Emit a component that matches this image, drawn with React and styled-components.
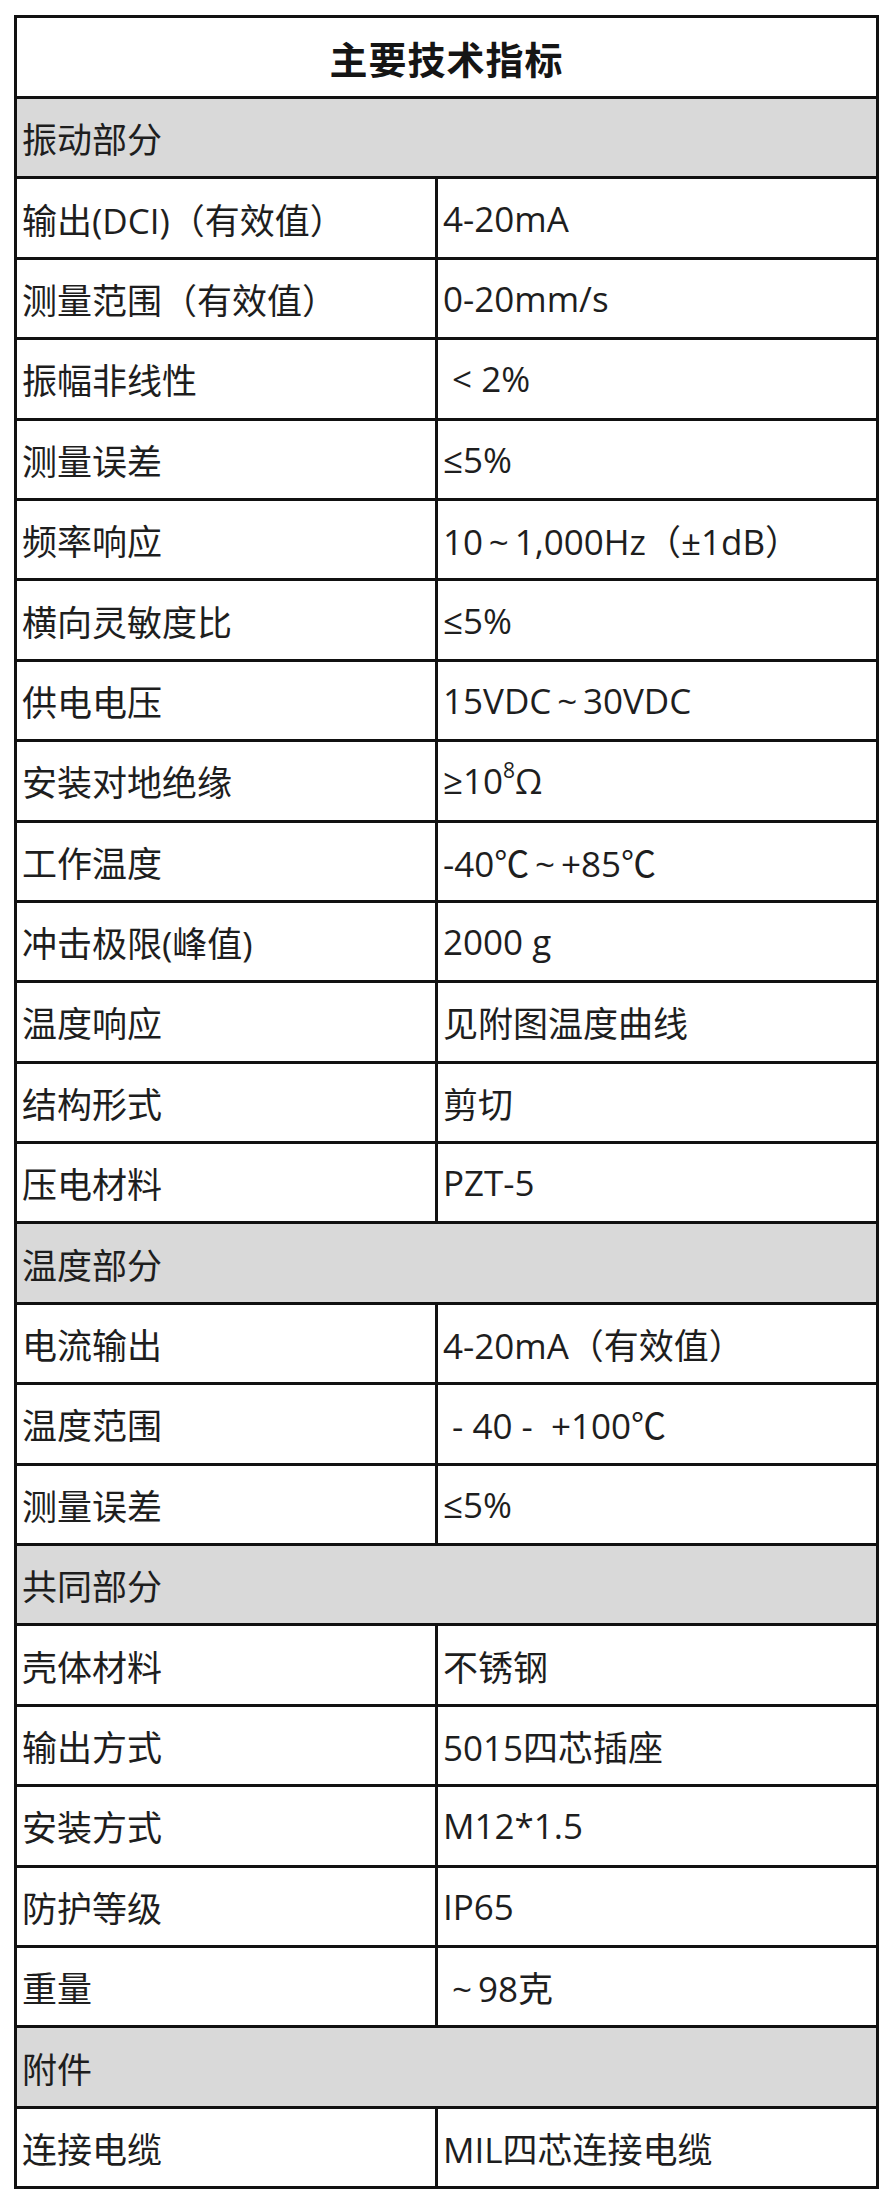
import React from "react";
import styled, { createGlobalStyle } from "styled-components";

const GlobalStyle = createGlobalStyle`
  html, body {
    margin: 0;
    padding: 0;
    background: #ffffff;
  }
  body {
    font-family: "Open Sans", "Noto Sans CJK SC", sans-serif;
    color: #1e1e1e;
  }
`;

const Page = styled.div`
  padding: 15px 0 0 14px;
`;

const SpecTable = styled.table`
  border-collapse: collapse;
  width: 862px;
  table-layout: fixed;
  border: 3px solid #111;
`;

const TitleRow = styled.tr`
  height: 81px;
  & > th {
    border: 3px solid #111;
    font-size: 38px;
    font-weight: 700;
    font-family: "Noto Sans CJK SC", sans-serif;
    text-align: center;
    color: #151515;
    letter-spacing: 1px;
  }
`;

const SectionRow = styled.tr`
  height: 80.4px;
  background: #d9d9d9;
  & > td {
    border: 3px solid #111;
    font-size: 35px;
    padding: 0 0 0 5px;
  }
`;

const SpecRow = styled.tr`
  height: 80.4px;
  & > td {
    border: 3px solid #111;
    font-size: 35px;
    padding: 0 0 0 5px;
    white-space: pre;
    overflow: hidden;
  }
`;

const Sup = styled.sup`
  font-size: 0.6em;
  vertical-align: 0.75em;
  line-height: 0;
`;

// narrow centred tilde, as in the original sheet
const T = "\u2009~\u2009";

const sections = [
  {
    title: "振动部分",
    rows: [
      ["输出(DCI)（有效值）", "4-20mA"],
      ["测量范围（有效值）", "0-20mm/s"],
      ["振幅非线性", " < 2%"],
      ["测量误差", "≤5%"],
      ["频率响应", `10${T}1,000Hz（±1dB）`],
      ["横向灵敏度比", "≤5%"],
      ["供电电压", `15VDC${T}30VDC`],
      ["安装对地绝缘", <>≥10<Sup>8</Sup>Ω</>],
      ["工作温度", `-40℃${T}+85℃`],
      ["冲击极限(峰值)", "2000 g"],
      ["温度响应", "见附图温度曲线"],
      ["结构形式", "剪切"],
      ["压电材料", "PZT-5"]
    ]
  },
  {
    title: "温度部分",
    rows: [
      ["电流输出", "4-20mA（有效值）"],
      ["温度范围", " - 40 -  +100℃"],
      ["测量误差", "≤5%"]
    ]
  },
  {
    title: "共同部分",
    rows: [
      ["壳体材料", "不锈钢"],
      ["输出方式", "5015四芯插座"],
      ["安装方式", "M12*1.5"],
      ["防护等级", "IP65"],
      ["重量", ` ~\u200998克`]
    ]
  },
  {
    title: "附件",
    rows: [["连接电缆", "MIL四芯连接电缆"]]
  }
];

export default function App() {
  return (
    <Page>
      <GlobalStyle />
      <SpecTable>
        <colgroup>
          <col style={{ width: "421px" }} />
          <col style={{ width: "441px" }} />
        </colgroup>
        <tbody>
          <TitleRow>
            <th colSpan={2}>主要技术指标</th>
          </TitleRow>
          {sections.map(section => (
            <React.Fragment key={section.title}>
              <SectionRow>
                <td colSpan={2}>{section.title}</td>
              </SectionRow>
              {section.rows.map(([label, value], i) => (
                <SpecRow key={section.title + i}>
                  <td>{label}</td>
                  <td>{value}</td>
                </SpecRow>
              ))}
            </React.Fragment>
          ))}
        </tbody>
      </SpecTable>
    </Page>
  );
}
